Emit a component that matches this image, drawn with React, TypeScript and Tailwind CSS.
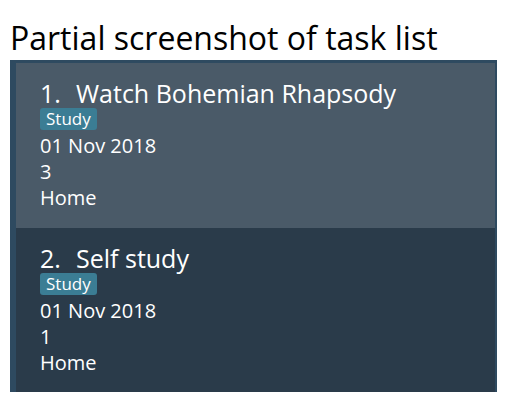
const tasks = [
  { id: 1, name: "Watch Bohemian Rhapsody", tag: "Study", date: "01 Nov 2018", priority: "3", place: "Home" },
  { id: 2, name: "Self study", tag: "Study", date: "01 Nov 2018", priority: "1", place: "Home" },
];

function TaskCard({ task, index }: { task: (typeof tasks)[number]; index: number }) {
  const bg = index % 2 === 0 ? "bg-[#4a5a68]" : "bg-[#2a3b4a]";
  return (
    <div className={`${bg} h-[165px] pl-[24px] pt-[17px] text-white`}>
      <div className="flex text-[25px] leading-[26px]">
        <span className="w-[36px]">{task.id}.</span>
        <span>{task.name}</span>
      </div>
      <div className="mt-[2px] flex">
        <span className="h-[22px] rounded-[3px] bg-[#3b7d94] px-[6px] text-[17px] leading-[22px]">{task.tag}</span>
      </div>
      <div className="mt-[3px] text-[20px] leading-[26px]">{task.date}</div>
      <div className="text-[20px] leading-[26px]">{task.priority}</div>
      <div className="text-[20px] leading-[26px]">{task.place}</div>
    </div>
  );
}

export default function App() {
  return (
    <div className="h-[400px] w-[508px] bg-white font-['Open_Sans',sans-serif]">
      <h1 className="pl-[10px] pt-[17px] text-[32px] leading-[41px] text-black">Partial screenshot of task list</h1>
      <div className="ml-[10px] mt-[2px] h-[332px] w-[487px] overflow-hidden border-l-[6px] border-r-[2px] border-t-[3px] border-[#2e4a60] bg-[#2a3b4a]">
        {tasks.map((t, i) => (
          <TaskCard key={t.id} task={t} index={i} />
        ))}
      </div>
    </div>
  );
}
